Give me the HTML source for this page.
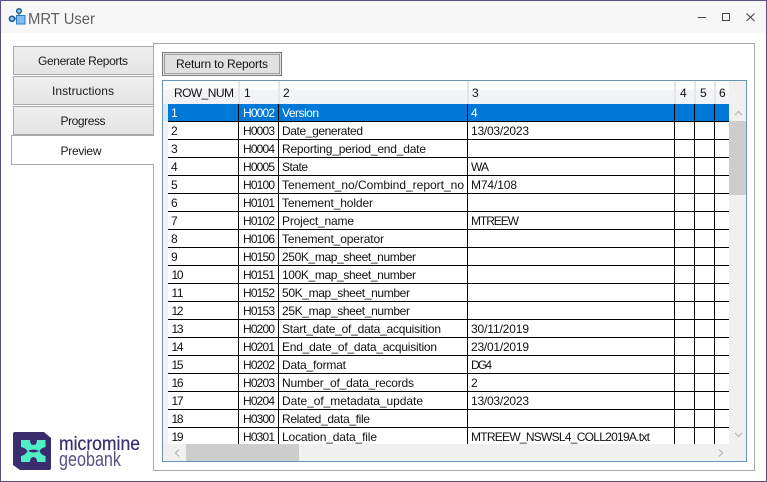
<!DOCTYPE html>
<html><head><meta charset="utf-8"><style>
html,body{margin:0;padding:0;width:767px;height:482px;overflow:hidden;background:#fff}
svg{display:block;font-family:"Liberation Sans",sans-serif;font-size:12px;fill:#000}
</style></head><body>
<svg width="767" height="482" viewBox="0 0 767 482" xmlns="http://www.w3.org/2000/svg">
<defs>
<linearGradient id="t" x1="0" y1="0" x2="0" y2="1"><stop offset="0" stop-color="#f0f0f0"/><stop offset="1" stop-color="#e3e3e3"/></linearGradient>
<linearGradient id="hd" x1="0" y1="0" x2="0" y2="1"><stop offset="0" stop-color="#ffffff"/><stop offset=".35" stop-color="#ffffff"/><stop offset=".4" stop-color="#f3f4f7"/><stop offset="1" stop-color="#f1f2f5"/></linearGradient>
</defs>
<rect x="0" y="0" width="767" height="482" fill="#5b4f8c"/>
<rect x="1" y="1" width="765" height="480" fill="#fff"/>
<rect x="1" y="1" width="765" height="32" fill="#f7f7f7"/>
<!-- app icon -->
<path d="M19 13V16M14 18.500H17" stroke="#1c5f9e" stroke-width="1.200" fill="none"/>
<rect x="16.500" y="15.500" width="8.500" height="8.500" fill="#85bdec" stroke="#2a7dc4"/>
<circle cx="19" cy="11" r="2.300" fill="#a6cdf0" stroke="#1c5f9e" stroke-width="1.500"/>
<circle cx="12" cy="18.800" r="2.500" fill="#a6cdf0" stroke="#1c5f9e" stroke-width="1.700"/>
<text x="28" y="24" font-size="16" fill="#5f5f5f" textLength="67" lengthAdjust="spacingAndGlyphs">MRT User</text>
<!-- window controls -->
<rect x="698" y="17" width="8" height="1" fill="#444"/>
<rect x="722.500" y="13.500" width="7" height="7" fill="none" stroke="#444"/>
<path d="M746.500 13.500L754.500 21M754.500 13.500L746.500 21" stroke="#444" stroke-width="1.100" fill="none"/>
<!-- panel -->
<rect x="153.500" y="43.500" width="601" height="427" fill="#fff" stroke="#a9a9a9"/>
<!-- tabs -->
<rect x="13.500" y="46.500" width="140" height="28" fill="url(#t)" stroke="#a9a9a9"/>
<rect x="13.500" y="76.500" width="140" height="28" fill="url(#t)" stroke="#a9a9a9"/>
<rect x="13.500" y="106.500" width="140" height="28" fill="url(#t)" stroke="#a9a9a9"/>
<rect x="11.500" y="135.500" width="142" height="29" fill="#fff" stroke="#a9a9a9"/>
<rect x="153" y="136" width="1" height="28" fill="#fff"/>
<g text-anchor="middle" fill="#1a1a1a">
<text x="83" y="65" textLength="90">Generate Reports</text>
<text x="83" y="95" textLength="62">Instructions</text>
<text x="83" y="125" textLength="45">Progress</text>
<text x="81" y="155" textLength="41">Preview</text>
</g>
<!-- button -->
<rect x="162.500" y="52.500" width="119" height="23" fill="#e1e1e1" stroke="#7a7a7a"/>
<rect x="164.500" y="54.500" width="115" height="19" fill="none" stroke="#555" stroke-dasharray="1 1"/>
<text x="176" y="68" textLength="92" fill="#111">Return to Reports</text>
<!-- grid -->
<rect x="162.500" y="80.500" width="584" height="381" fill="#f0f0f0" stroke="#6b94bd"/>
<rect x="163" y="81" width="566" height="23" fill="url(#hd)"/>
<rect x="163" y="104" width="5" height="340" fill="#f1f2f5"/>
<rect x="163" y="104" width="5" height="17" fill="#d8e8f6"/>
<rect x="168" y="104" width="561" height="340" fill="#fff"/>
<rect x="168" y="104" width="561" height="17" fill="#0078d7"/>
<g fill="#e4e5e8">
<rect x="238" y="81" width="2" height="23"/><rect x="278" y="81" width="2" height="23"/><rect x="467" y="81" width="2" height="23"/><rect x="674" y="81" width="2" height="23"/><rect x="694" y="81" width="2" height="23"/><rect x="714" y="81" width="2" height="23"/>
</g>
<!-- grid lines -->
<g fill="#000">
<rect x="238" y="104" width="1" height="340"/><rect x="278" y="104" width="1" height="340"/><rect x="467" y="104" width="1" height="340"/><rect x="674" y="104" width="1" height="340"/><rect x="694" y="104" width="1" height="340"/><rect x="714" y="104" width="1" height="340"/>
<rect x="168" y="121" width="561" height="1"/><rect x="168" y="139" width="561" height="1"/><rect x="168" y="157" width="561" height="1"/><rect x="168" y="175" width="561" height="1"/><rect x="168" y="193" width="561" height="1"/><rect x="168" y="211" width="561" height="1"/><rect x="168" y="229" width="561" height="1"/><rect x="168" y="247" width="561" height="1"/><rect x="168" y="265" width="561" height="1"/><rect x="168" y="283" width="561" height="1"/><rect x="168" y="301" width="561" height="1"/><rect x="168" y="319" width="561" height="1"/><rect x="168" y="337" width="561" height="1"/><rect x="168" y="355" width="561" height="1"/><rect x="168" y="373" width="561" height="1"/><rect x="168" y="391" width="561" height="1"/><rect x="168" y="409" width="561" height="1"/><rect x="168" y="427" width="561" height="1"/>
</g>
<!-- header text -->
<g fill="#111">
<text x="174" y="97" textLength="60">ROW_NUM</text><text x="244" y="97">1</text><text x="283" y="97">2</text><text x="472" y="97">3</text><text x="680" y="97">4</text><text x="700" y="97">5</text><text x="719" y="97">6</text>
</g>
<!-- rows -->
<g fill="#fff"><text x="171" y="117">1</text><text x="243" y="117" textLength="32">H0002</text><text x="282" y="117" textLength="37">Version</text><text x="471" y="117">4</text></g>
<g fill="#111">
<text x="171" y="135">2</text><text x="243" y="135" textLength="32">H0003</text><text x="282" y="135" textLength="81">Date_generated</text><text x="471" y="135" textLength="58">13/03/2023</text>
<text x="171" y="153">3</text><text x="243" y="153" textLength="32">H0004</text><text x="282" y="153" textLength="144">Reporting_period_end_date</text>
<text x="171" y="171">4</text><text x="243" y="171" textLength="32">H0005</text><text x="282" y="171" textLength="26">State</text><text x="471" y="171" textLength="18">WA</text>
<text x="171" y="189">5</text><text x="243" y="189" textLength="32">H0100</text><text x="282" y="189" textLength="182">Tenement_no/Combind_report_no</text><text x="471" y="189" textLength="46">M74/108</text>
<text x="171" y="207">6</text><text x="243" y="207" textLength="32">H0101</text><text x="282" y="207" textLength="91">Tenement_holder</text>
<text x="171" y="225">7</text><text x="243" y="225" textLength="32">H0102</text><text x="282" y="225" textLength="72">Project_name</text><text x="471" y="225" textLength="48">MTREEW</text>
<text x="171" y="243">8</text><text x="243" y="243" textLength="32">H0106</text><text x="282" y="243" textLength="102">Tenement_operator</text>
<text x="171" y="261">9</text><text x="243" y="261" textLength="32">H0150</text><text x="282" y="261" textLength="134">250K_map_sheet_number</text>
<text x="171.500" y="279" textLength="12">10</text><text x="243" y="279" textLength="32">H0151</text><text x="282" y="279" textLength="134">100K_map_sheet_number</text>
<text x="171.500" y="297" textLength="12">11</text><text x="243" y="297" textLength="32">H0152</text><text x="282" y="297" textLength="128">50K_map_sheet_number</text>
<text x="171.500" y="315" textLength="12">12</text><text x="243" y="315" textLength="32">H0153</text><text x="282" y="315" textLength="128">25K_map_sheet_number</text>
<text x="171.500" y="333" textLength="12">13</text><text x="243" y="333" textLength="32">H0200</text><text x="282" y="333" textLength="159">Start_date_of_data_acquisition</text><text x="471" y="333" textLength="58">30/11/2019</text>
<text x="171.500" y="351" textLength="12">14</text><text x="243" y="351" textLength="32">H0201</text><text x="282" y="351" textLength="155">End_date_of_data_acquisition</text><text x="471" y="351" textLength="58">23/01/2019</text>
<text x="171.500" y="369" textLength="12">15</text><text x="243" y="369" textLength="32">H0202</text><text x="282" y="369" textLength="64">Data_format</text><text x="471" y="369" textLength="21">DG4</text>
<text x="171.500" y="387" textLength="12">16</text><text x="243" y="387" textLength="32">H0203</text><text x="282" y="387" textLength="132">Number_of_data_records</text><text x="471" y="387">2</text>
<text x="171.500" y="405" textLength="12">17</text><text x="243" y="405" textLength="32">H0204</text><text x="282" y="405" textLength="141">Date_of_metadata_update</text><text x="471" y="405" textLength="58">13/03/2023</text>
<text x="171.500" y="423" textLength="12">18</text><text x="243" y="423" textLength="32">H0300</text><text x="282" y="423" textLength="88">Related_data_file</text>
<text x="171.500" y="441" textLength="12">19</text><text x="243" y="441" textLength="32">H0301</text><text x="282" y="441" textLength="95">Location_data_file</text><text x="471" y="441" textLength="179">MTREEW_NSWSL4_COLL2019A.txt</text>
</g>
<!-- scrollbars -->
<rect x="729" y="121" width="17" height="74" fill="#cdcdcd"/>
<rect x="186" y="444" width="113" height="17" fill="#cdcdcd"/>
<g fill="none" stroke="#b5b5b5" stroke-width="1.200">
<path d="M735 115L738.500 111.500L742 115"/>
<path d="M735 433L738.500 436.500L742 433"/>
<path d="M179 449.500L175.500 453L179 456.500"/>
<path d="M719 449.500L722.500 453L719 456.500"/>
</g>
<!-- logo -->
<path d="M15 432H44L51 438V468Q51 470 49 470H20L13 465V434Q13 432 15 432Z" fill="#3a2d6e"/>
<path d="M21 440H30Q30 445 33.500 445Q37 445 37 440H45.500V447Q41 448 39.500 451Q41 455 45.500 456V462H37Q37 457 33.500 457Q30 457 30 462H21V456Q25.500 455 27.500 451Q25.500 448 21 447Z" fill="#4ff0c6"/>
<path d="M28 451Q33.500 448 39 451Q33.500 454 28 451Z" fill="#3a2d6e"/>
<text x="59" y="450" font-size="19" fill="#3a2d6e" stroke="#3a2d6e" stroke-width=".25" textLength="81" lengthAdjust="spacingAndGlyphs">micromine</text>
<text x="59" y="466" font-size="20" fill="#5a4f88" textLength="62" lengthAdjust="spacingAndGlyphs">geobank</text>
</svg>
</body></html>
